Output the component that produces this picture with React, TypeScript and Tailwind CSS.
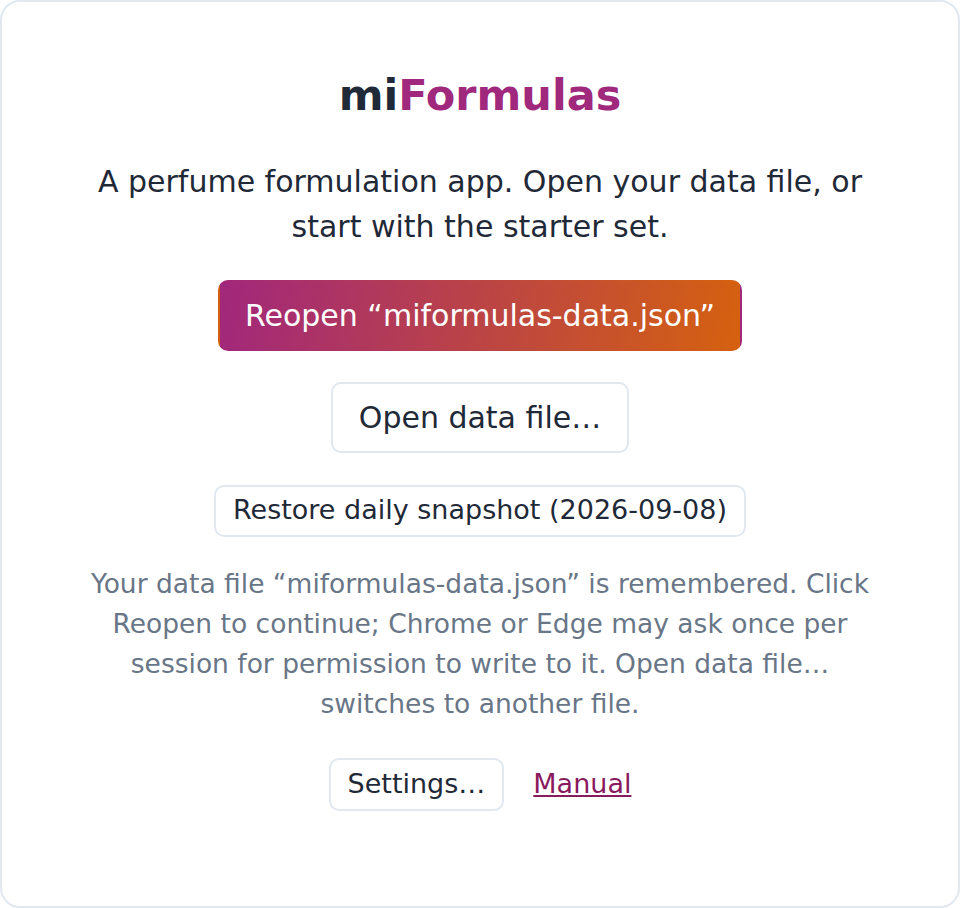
import React from 'react';

export default function App() {
  const fileName = 'miformulas-data.json';
  const snapshotDate = '2026-09-08';

  return (
    <div className="min-h-screen bg-white font-['DejaVu_Sans',sans-serif] text-[#1f2937]">
      {/* Welcome card */}
      <div className="h-[908px] rounded-[20px] border-2 border-[#e2e8f0] bg-white px-20 pt-[61px]">
        <div className="mx-auto flex max-w-[800px] flex-col items-center text-center">
          <h1 className="text-[43px] font-bold leading-[1.5]">
            <span className="text-[#1f2937]">mi</span>
            <span className="text-[#a0287d]">Formulas</span>
          </h1>

          <p className="mt-[31px] text-[30px] leading-[45px]">
            A perfume formulation app. Open your data file, or start with the starter set.
          </p>

          <button className="mt-[31px] flex h-[71px] items-center rounded-[10px] border-2 border-transparent bg-[linear-gradient(100deg,#a1277c,#d5610f)] px-[25.5px] text-[30px] text-white">
            Reopen “{fileName}”
          </button>

          <button className="mt-[31px] flex h-[71px] items-center rounded-[10px] border-2 border-[#e2e8f0] bg-white px-[26px] text-[30px]">
            Open data file…
          </button>

          <button className="mt-[32px] flex h-[52px] items-center rounded-[10px] border-2 border-[#e2e8f0] bg-white px-[17px] text-[27px]">
            Restore daily snapshot ({snapshotDate})
          </button>

          <p className="mt-[27px] text-[26.5px] leading-[40px] text-[#687687]">
            Your data file “{fileName}” is remembered. Click Reopen to continue; Chrome or Edge may
            ask once per session for permission to write to it. Open data file… switches to another
            file.
          </p>

          <div className="mt-[34px] flex items-center gap-[29px]">
            <button className="flex h-[53px] items-center rounded-[10px] border-2 border-[#e2e8f0] bg-white px-[17px] text-[27px]">
              Settings…
            </button>
            <a href="#" className="text-[27px] text-[#8a1a5e] underline">
              Manual
            </a>
          </div>
        </div>
      </div>
    </div>
  );
}
